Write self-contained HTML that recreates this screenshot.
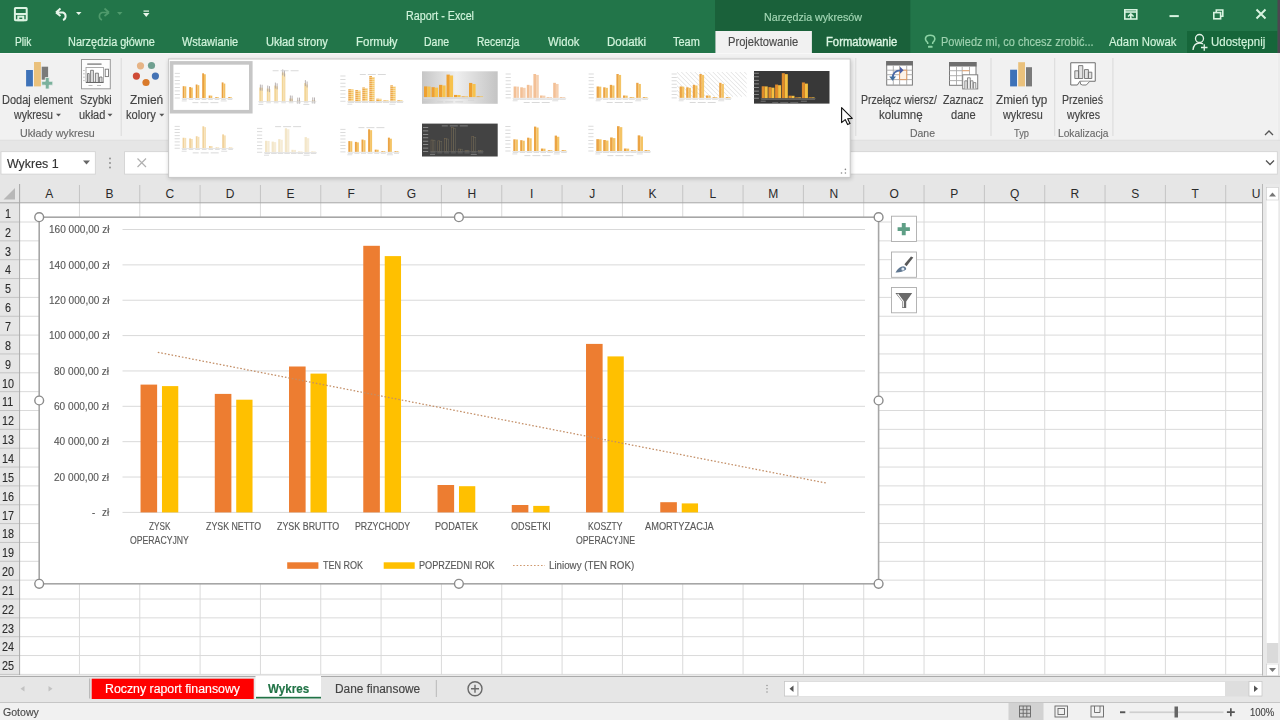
<!DOCTYPE html>
<html><head><meta charset="utf-8"><title>Raport - Excel</title>
<style>
html,body{margin:0;padding:0;width:1280px;height:720px;overflow:hidden;background:#fff;font-family:"Liberation Sans",sans-serif}
.l{position:absolute;left:0;top:0;width:1280px;height:720px}
.tx span{position:absolute;white-space:pre;transform-origin:0 0}
</style></head><body>
<svg class="l" style="z-index:1" width="1280" height="720" viewBox="0 0 1280 720"><rect x="0" y="0" width="1280" height="53" fill="#227549"/><rect x="715" y="0" width="195.3" height="53" fill="#1a613a"/><rect x="715.4" y="31" width="96.5" height="22.5" fill="#f1f1f1"/><rect x="1187" y="31" width="90.5" height="22" fill="#16663a"/><rect x="1277.5" y="0" width="2.5" height="53" fill="#4d4650"/><g fill="none" stroke="#dcf3e2" stroke-width="2"><rect x="14.9" y="8" width="11.8" height="12.2" rx="0.6"/><line x1="15" y1="14" x2="26.6" y2="14"/><rect x="18.3" y="16.6" width="5" height="3.6"/></g><path d="M56,12.5 L60.5,8.5 M56,12.5 L60.5,16 M56.5,12.5 L63,12.5 A4,4 0 0 1 63,20" fill="none" stroke="#e8f5ea" stroke-width="2"/><path d="M76,12 L81.5,12 L78.75,15 Z" fill="#e8f5ea"/><path d="M109,12.5 L104.5,8.5 M109,12.5 L104.5,16 M108.5,12.5 L102,12.5 A4,4 0 0 0 102,20" fill="none" stroke="#4f9a6c" stroke-width="1.7"/><path d="M117,12 L122.5,12 L119.75,15 Z" fill="#4f9a6c"/><rect x="143.5" y="10.5" width="5.5" height="1.2" fill="#e8f5ea"/><path d="M143,13 L149.5,13 L146.25,17 Z" fill="#e8f5ea"/><g fill="none" stroke="#d8f3e0" stroke-width="1.6"><rect x="1124.8" y="9.8" width="12" height="9.2"/><line x1="1124.8" y1="12" x2="1136.8" y2="12"/><path d="M1128,16.5 L1130.8,13.8 L1133.6,16.5 M1130.8,14 L1130.8,19"/></g><rect x="1169.5" y="15.1" width="9.3" height="2" fill="#d8f3e0"/><g fill="none" stroke="#d8f3e0" stroke-width="1.6"><rect x="1213.8" y="12.6" width="6.8" height="6.2"/><path d="M1216.3,12.6 L1216.3,10 L1222.8,10 L1222.8,16.3 L1220.6,16.3"/></g><path d="M1256.5,9.5 L1265.5,18.5 M1265.5,9.5 L1256.5,18.5" stroke="#d8f3e0" stroke-width="2"/><g fill="none" stroke="#8dd3a5" stroke-width="1.5"><path d="M927.8,44 L927.6,42.5 C925.8,41 925.3,38.8 925.6,37.8 C926.2,35.8 928,35.2 930.2,35.2 C932.4,35.2 934.2,35.8 934.7,37.8 C935,38.8 934.6,41 932.8,42.5 L932.6,44"/></g><rect x="928" y="45.8" width="4.6" height="2" rx="0.6" fill="#8dd3a5"/><g fill="none" stroke="#e4f2e8" stroke-width="1.3"><circle cx="1199.5" cy="38.5" r="4"/><path d="M1193,50 C1193.5,45 1196,43 1199.5,43 C1201,43 1202,43.3 1203,44"/><path d="M1201,47.5 L1207.5,47.5 M1204.25,44.2 L1204.25,50.8"/></g><rect x="0" y="53" width="1277.5" height="87.5" fill="#f1f1f1"/><rect x="0" y="53" width="1277.5" height="1" fill="#f8f8f8"/><rect x="1277.5" y="53" width="2.5" height="130" fill="#ececec"/><rect x="0" y="139.8" width="1280" height="1" fill="#dadada"/><rect x="120.7" y="58" width="1" height="78" fill="#dadada"/><rect x="855.3" y="58" width="1" height="78" fill="#dadada"/><rect x="990.5" y="58" width="1" height="78" fill="#dadada"/><rect x="1054.2" y="58" width="1" height="78" fill="#dadada"/><rect x="1112.4" y="58" width="1" height="78" fill="#dadada"/><rect x="26.1" y="70" width="6.8" height="16.4" fill="#3e72b8"/><rect x="34" y="62" width="6.9" height="24.4" fill="#eac17c"/><rect x="41.7" y="66.7" width="6.4" height="13" fill="#7a7a7a"/><path d="M45.3,77.5 h3.9 v3.8 h3.6 v3.9 h-3.6 v3.8 h-3.9 v-3.8 h-3.6 v-3.9 h3.6 z" fill="#7bb19c" stroke="#f1f1f1" stroke-width="0.8"/><path d="M56,113.8 L61,113.8 L58.5,116.5 Z" fill="#555"/><g><rect x="81.5" y="59.5" width="28.8" height="29.3" fill="#fdfdfd" stroke="#9a9a9a" stroke-width="1"/><rect x="87" y="63.2" width="14.8" height="1.8" rx="0.9" fill="#9a9a9a"/><rect x="86" y="67.4" width="17.4" height="15" fill="#fff" stroke="#999" stroke-width="0.8"/><path d="M86,82.4 H103.4" stroke="#666" stroke-width="1.2"/><path d="M87.5,82 V73.5 H89.2 V82 M90.6,82 V70.3 H93.4 V82 M95.4,82 V73.2 H98.4 V82 M99.6,82 V77 H102 V82" fill="#e4e4e4" stroke="#666" stroke-width="0.8"/><rect x="105.2" y="69.2" width="3.3" height="7.4" fill="#fff" stroke="#777" stroke-width="0.9"/><path d="M83.2,70.5 h1.5 M83.2,73.8 h1.5 M83.2,77.2 h1.5 M83.2,80.6 h1.5" stroke="#999" stroke-width="0.7"/><rect x="88.5" y="85" width="4" height="0.8" fill="#aaa"/><rect x="97" y="85" width="4" height="0.8" fill="#aaa"/></g><path d="M107.5,113.8 L112.5,113.8 L110,116.5 Z" fill="#555"/><circle cx="140.5" cy="65.8" r="3.6" fill="#e6b486"/><circle cx="151.5" cy="65.5" r="3.6" fill="#6f9f90"/><circle cx="136.4" cy="76.1" r="3.6" fill="#cf4b36"/><circle cx="155.4" cy="76.1" r="3.6" fill="#4472b4"/><circle cx="146" cy="82.5" r="3.6" fill="#d97a2b"/><path d="M159.3,113.8 L164.3,113.8 L161.8,116.5 Z" fill="#555"/><g><rect x="886.7" y="61.6" width="25.7" height="23.5" fill="#fff" stroke="#7a7a7a" stroke-width="1"/><rect x="886.2" y="61.1" width="26.7" height="4.4" fill="#6e6e6e"/><path d="M886.5,70.2 H912.5 M886.5,74.7 H912.5 M886.5,79.6 H912.5 M893.3,65.5 V85.2 M899.6,65.5 V85.2 M906.7,65.5 V85.2" stroke="#a8a8a8" stroke-width="0.9"/><rect x="899.6" y="70.2" width="7.1" height="9.4" fill="#fdf3e8" stroke="#dc9a66" stroke-width="1"/><path d="M892.6,78.5 C892.6,72.5 895.5,70.3 901,70.3" fill="none" stroke="#4a6aa8" stroke-width="1.7"/><path d="M900,66.8 L903.6,70.3 L900,73.8 Z" fill="#4a5fa8"/><path d="M889.2,76.6 L892.6,80.8 L896,76.6 Z" fill="#3f6ea0"/></g><g><rect x="949.5" y="62.5" width="26.5" height="22.8" fill="#fff" stroke="#7a7a7a" stroke-width="1"/><rect x="949" y="62" width="27.5" height="4.5" fill="#6e6e6e"/><path d="M949.5,75.7 H976 M949.5,80.6 H976 M956.5,66.5 V85 M962.2,66.5 V85 M969.5,66.5 V85" stroke="#a8a8a8" stroke-width="0.9"/><path d="M949.5,70.7 H962.2" stroke="#a8a8a8" stroke-width="0.9"/><path d="M962.2,70.7 H969.5" stroke="#dfa070" stroke-width="1.1"/><rect x="962.7" y="74.8" width="15" height="14.1" fill="#fff" stroke="#7f7f7f" stroke-width="1"/><path d="M964.8,88.5 V80.8 H967.2 V88.5 M967.5,88.5 V77.8 H970.3 V88.5 M970.5,88.5 V80.8 H973 V88.5 M973.3,88.5 V82.6 H975.8 V88.5" fill="#eee" stroke="#777" stroke-width="0.8"/></g><rect x="1010.1" y="69.7" width="6.9" height="16.7" fill="#3e72b8"/><rect x="1018.2" y="62.2" width="6.8" height="24.2" fill="#eac17c"/><rect x="1026" y="67.2" width="6" height="19.2" fill="#7a7a7a"/><g><path d="M1070.75,62.75 H1095.25 V81.25 H1079.8 L1077.4,85 H1070.75 Z" fill="#fff" stroke="#6f6f6f" stroke-width="1"/><path d="M1080.2,81.8 Q1079.8,85 1082.5,85 H1086.3 L1089.5,81.6" fill="#fff" stroke="#6f6f6f" stroke-width="0.9"/><path d="M1074.8,78.5 V70.8 H1078.6 V78.5 Z M1078.6,78.5 V65.6 H1082.8 V78.5 Z M1084.5,78.5 V69.6 H1088.4 V78.5 Z M1088.4,78.5 V72.2 H1091.8 V78.5 Z" fill="#e2e2e2" stroke="#707070" stroke-width="0.9"/></g><path d="M1265,135 L1269,131 L1273,135" fill="none" stroke="#555" stroke-width="1.3"/><rect x="0" y="140.8" width="1280" height="43.2" fill="#e6e6e6"/><rect x="1" y="151.7" width="94.3" height="22.4" fill="#fff" stroke="#d0d0d0" stroke-width="0.8"/><path d="M83,160.5 L90,160.5 L86.5,164.5 Z" fill="#666"/><circle cx="110" cy="158.5" r="0.9" fill="#888"/><circle cx="110" cy="163" r="0.9" fill="#888"/><circle cx="110" cy="167.5" r="0.9" fill="#888"/><rect x="124.6" y="151.7" width="1152.7" height="22.4" fill="#fff" stroke="#d0d0d0" stroke-width="0.8"/><path d="M137.5,158.5 L146,167 M146,158.5 L137.5,167" stroke="#b0b0b0" stroke-width="1.2"/><path d="M1266,160.5 L1270,164.5 L1274,160.5" fill="none" stroke="#555" stroke-width="1.3"/><rect x="0" y="184" width="1262.5" height="19" fill="#e6e6e6"/><rect x="0" y="203" width="19.6" height="472" fill="#e6e6e6"/><rect x="19.6" y="203" width="1243" height="472.5" fill="#fff"/><path d="M15,188 L15,199.5 L3.5,199.5 Z" fill="#b8b8b8"/><path d="M19.6,222.00 H1262.5 M19.6,240.85 H1262.5 M19.6,259.70 H1262.5 M19.6,278.55 H1262.5 M19.6,297.40 H1262.5 M19.6,316.25 H1262.5 M19.6,335.10 H1262.5 M19.6,353.95 H1262.5 M19.6,372.80 H1262.5 M19.6,391.65 H1262.5 M19.6,410.50 H1262.5 M19.6,429.35 H1262.5 M19.6,448.20 H1262.5 M19.6,467.05 H1262.5 M19.6,485.90 H1262.5 M19.6,504.75 H1262.5 M19.6,523.60 H1262.5 M19.6,542.45 H1262.5 M19.6,561.30 H1262.5 M19.6,580.15 H1262.5 M19.6,599.00 H1262.5 M19.6,617.85 H1262.5 M19.6,636.70 H1262.5 M19.6,655.55 H1262.5 M19.6,674.40 H1262.5 M79.44,203 V675 M139.77,203 V675 M200.10,203 V675 M260.43,203 V675 M320.76,203 V675 M381.09,203 V675 M441.42,203 V675 M501.75,203 V675 M562.08,203 V675 M622.41,203 V675 M682.74,203 V675 M743.07,203 V675 M803.40,203 V675 M863.73,203 V675 M924.06,203 V675 M984.39,203 V675 M1044.72,203 V675 M1105.05,203 V675 M1165.38,203 V675 M1225.71,203 V675" stroke="#dadada" stroke-width="1" fill="none"/><path d="M79.44,185 V203 M139.77,185 V203 M200.10,185 V203 M260.43,185 V203 M320.76,185 V203 M381.09,185 V203 M441.42,185 V203 M501.75,185 V203 M562.08,185 V203 M622.41,185 V203 M682.74,185 V203 M743.07,185 V203 M803.40,185 V203 M863.73,185 V203 M924.06,185 V203 M984.39,185 V203 M1044.72,185 V203 M1105.05,185 V203 M1165.38,185 V203 M1225.71,185 V203 M0,222.00 H19.6 M0,240.85 H19.6 M0,259.70 H19.6 M0,278.55 H19.6 M0,297.40 H19.6 M0,316.25 H19.6 M0,335.10 H19.6 M0,353.95 H19.6 M0,372.80 H19.6 M0,391.65 H19.6 M0,410.50 H19.6 M0,429.35 H19.6 M0,448.20 H19.6 M0,467.05 H19.6 M0,485.90 H19.6 M0,504.75 H19.6 M0,523.60 H19.6 M0,542.45 H19.6 M0,561.30 H19.6 M0,580.15 H19.6 M0,599.00 H19.6 M0,617.85 H19.6 M0,636.70 H19.6 M0,655.55 H19.6 M0,674.40 H19.6" stroke="#c4c4c4" stroke-width="1" fill="none"/><rect x="0" y="202.3" width="1262.5" height="1" fill="#a8a8a8"/><rect x="19.1" y="184" width="1" height="491" fill="#a8a8a8"/><rect x="1262.5" y="184" width="17.5" height="492" fill="#e9e9e9"/><rect x="1266.7" y="187.5" width="11.6" height="488" fill="#fff"/><rect x="1266.7" y="187.5" width="11.6" height="12.5" fill="#fff" stroke="#c8c8c8" stroke-width="0.6"/><path d="M1269,196.5 L1272.5,192.5 L1276,196.5 Z" fill="#777"/><rect x="1266.7" y="643" width="11.6" height="20" fill="#dadada"/><rect x="1266.7" y="664" width="11.6" height="12" fill="#fff" stroke="#c8c8c8" stroke-width="0.6"/><path d="M1269,668 L1272.5,672 L1276,668 Z" fill="#777"/><rect x="1262" y="184" width="0.9" height="492" fill="#b0b0b0"/><rect x="0" y="675.5" width="1280" height="27" fill="#e6e6e6"/><rect x="0" y="675.9" width="1280" height="1.1" fill="#ababab"/><rect x="0" y="702" width="1280" height="1" fill="#c6c6c6"/><rect x="0" y="703" width="1280" height="17" fill="#f1f1f1"/><path d="M24.5,686 L20.5,688.75 L24.5,691.5 Z" fill="#c2c2c2"/><path d="M48.5,686 L52.5,688.75 L48.5,691.5 Z" fill="#c2c2c2"/><rect x="89.2" y="678.5" width="1" height="20" fill="#b0b0b0"/><rect x="91.7" y="678.7" width="162" height="20.3" fill="#ff0000"/><rect x="255.5" y="676" width="65.5" height="22.5" fill="#ffffff"/><rect x="256" y="696.8" width="65" height="1.7" fill="#217346"/><rect x="435.8" y="680" width="1" height="17" fill="#b8b8b8"/><g fill="none" stroke="#6a6a6a" stroke-width="1.4"><circle cx="475" cy="688.75" r="7"/><path d="M471,688.75 H479 M475,684.75 V692.75"/></g><circle cx="767" cy="685.5" r="0.8" fill="#999"/><circle cx="767" cy="688.75" r="0.8" fill="#999"/><circle cx="767" cy="692" r="0.8" fill="#999"/><rect x="784" y="681" width="478" height="15.5" fill="#dedede"/><rect x="784.5" y="681.5" width="13" height="14.5" fill="#fff" stroke="#c4c4c4" stroke-width="0.7"/><path d="M793.5,685.5 L789.5,688.75 L793.5,692 Z" fill="#555"/><rect x="799" y="682" width="426" height="14" fill="#fff"/><rect x="1249" y="681.5" width="13" height="14.5" fill="#fff" stroke="#c4c4c4" stroke-width="0.7"/><path d="M1254,685.5 L1258,688.75 L1254,692 Z" fill="#555"/><rect x="1008.5" y="703" width="35" height="17" fill="#d2d2d2"/><g fill="none" stroke="#666" stroke-width="0.9"><rect x="1019.5" y="706" width="11" height="11"/><path d="M1023.2,706 V717 M1026.8,706 V717 M1019.5,709.7 H1030.5 M1019.5,713.3 H1030.5"/></g><g fill="none" stroke="#666" stroke-width="0.9"><rect x="1055" y="706" width="12.5" height="11"/><rect x="1058" y="708.5" width="6.5" height="6"/></g><g fill="none" stroke="#666" stroke-width="0.9"><rect x="1091" y="706" width="12.5" height="11"/><path d="M1094.5,706 V712.5 H1100 V706"/></g><rect x="1120" y="711.3" width="5.3" height="1.9" fill="#555"/><rect x="1129.5" y="711.4" width="94" height="1.7" fill="#cfcfcf"/><rect x="1174.5" y="706.5" width="3.5" height="11" fill="#666"/><path d="M1226.9,712.2 H1234.8 M1230.85,708.3 V716.2" stroke="#555" stroke-width="1.7"/><rect x="39.2" y="217.2" width="839.4" height="366.59999999999997" fill="#fff" stroke="#a6a6a6" stroke-width="1.6"/><path d="M122.5,512.40 H865 M122.5,477.04 H865 M122.5,441.67 H865 M122.5,406.31 H865 M122.5,370.95 H865 M122.5,335.59 H865 M122.5,300.23 H865 M122.5,264.86 H865 M122.5,229.50 H865" stroke="#d9d9d9" stroke-width="1" fill="none"/><rect x="140.53" y="384.60" width="16.6" height="127.80" fill="#ed7d31"/><rect x="161.97" y="386.10" width="16.3" height="126.30" fill="#ffc000"/><rect x="214.78" y="393.90" width="16.6" height="118.50" fill="#ed7d31"/><rect x="236.22" y="399.70" width="16.3" height="112.70" fill="#ffc000"/><rect x="289.02" y="366.50" width="16.6" height="145.90" fill="#ed7d31"/><rect x="310.48" y="373.60" width="16.3" height="138.80" fill="#ffc000"/><rect x="363.27" y="245.80" width="16.6" height="266.60" fill="#ed7d31"/><rect x="384.73" y="256.10" width="16.3" height="256.30" fill="#ffc000"/><rect x="437.52" y="485.00" width="16.6" height="27.40" fill="#ed7d31"/><rect x="458.98" y="486.20" width="16.3" height="26.20" fill="#ffc000"/><rect x="511.77" y="505.00" width="16.6" height="7.40" fill="#ed7d31"/><rect x="533.23" y="505.90" width="16.3" height="6.50" fill="#ffc000"/><rect x="586.02" y="343.90" width="16.6" height="168.50" fill="#ed7d31"/><rect x="607.48" y="356.40" width="16.3" height="156.00" fill="#ffc000"/><rect x="660.27" y="502.20" width="16.6" height="10.20" fill="#ed7d31"/><rect x="681.73" y="503.40" width="16.3" height="9.00" fill="#ffc000"/><path d="M157.8,352.3 L827,483.2" stroke="#c38e66" stroke-width="1.25" stroke-dasharray="1.6 1.9" fill="none"/><rect x="287.2" y="562.3" width="31.2" height="6.5" fill="#ed7d31"/><rect x="383.7" y="562.3" width="31" height="6.5" fill="#ffc000"/><path d="M513,565.5 H545" stroke="#cf9a70" stroke-width="1.2" stroke-dasharray="1.6 1.9"/><circle cx="39.20" cy="217.20" r="4.4" fill="#fff" stroke="#8c8c8c" stroke-width="1.4"/><circle cx="458.90" cy="217.20" r="4.4" fill="#fff" stroke="#8c8c8c" stroke-width="1.4"/><circle cx="878.60" cy="217.20" r="4.4" fill="#fff" stroke="#8c8c8c" stroke-width="1.4"/><circle cx="39.20" cy="400.50" r="4.4" fill="#fff" stroke="#8c8c8c" stroke-width="1.4"/><circle cx="878.60" cy="400.50" r="4.4" fill="#fff" stroke="#8c8c8c" stroke-width="1.4"/><circle cx="39.20" cy="583.80" r="4.4" fill="#fff" stroke="#8c8c8c" stroke-width="1.4"/><circle cx="458.90" cy="583.80" r="4.4" fill="#fff" stroke="#8c8c8c" stroke-width="1.4"/><circle cx="878.60" cy="583.80" r="4.4" fill="#fff" stroke="#8c8c8c" stroke-width="1.4"/><rect x="891.5" y="216.2" width="25" height="25.3" fill="#fff" stroke="#adadad" stroke-width="0.9"/><rect x="891.5" y="252" width="25" height="25.3" fill="#fff" stroke="#adadad" stroke-width="0.9"/><rect x="891.5" y="287.5" width="25" height="25.3" fill="#fff" stroke="#adadad" stroke-width="0.9"/><path d="M901.8,223 h3.9 v4.2 h4.2 v3.9 h-4.2 v4.2 h-3.9 v-4.2 h-4.2 v-3.9 h4.2 z" fill="#5f9f86"/><path d="M913.3,257.6 L911,256.6 L904.4,264.3 L906.5,266.2 Z" fill="#595959"/><path d="M895.5,272.4 C897.4,268.6 900.4,266.2 903.4,266.2 C905.4,266.6 906.6,268 906.1,269.4 C903.6,271.7 899.1,272.6 895.5,272.4 Z" fill="#5f7791"/><circle cx="902.9" cy="268.9" r="1.5" fill="#dfeaf4"/><path d="M895.4,293 H912.2 L906.2,301.4 V308 H902.2 V301.4 Z" fill="#6a6a6a"/><path d="M897.6,293.9 L903.3,301.5 V307.3" fill="none" stroke="#fff" stroke-width="1.1"/></svg>
<div class="l tx" style="z-index:2"><span style="left:406.30px;top:9.84px;font-size:12px;line-height:12px;color:#d2f4dc;-webkit-text-stroke:0.15px #d2f4dc;transform:scaleX(0.8944);">Raport - Excel</span><span style="left:763.50px;top:11.76px;font-size:10.8px;line-height:10.8px;color:#a5d8b6;-webkit-text-stroke:0.15px #a5d8b6;transform:scaleX(0.9889);">Narzędzia wykresów</span><span style="left:14.60px;top:36.14px;font-size:12px;line-height:12px;color:#d2f4dc;-webkit-text-stroke:0.2px #d2f4dc;transform:scaleX(0.8458);">Plik</span><span style="left:67.50px;top:36.14px;font-size:12px;line-height:12px;color:#d2f4dc;-webkit-text-stroke:0.2px #d2f4dc;transform:scaleX(0.9111);">Narzędzia główne</span><span style="left:182.00px;top:36.14px;font-size:12px;line-height:12px;color:#d2f4dc;-webkit-text-stroke:0.2px #d2f4dc;transform:scaleX(0.9160);">Wstawianie</span><span style="left:265.70px;top:36.14px;font-size:12px;line-height:12px;color:#d2f4dc;-webkit-text-stroke:0.2px #d2f4dc;transform:scaleX(0.9282);">Układ strony</span><span style="left:355.50px;top:36.14px;font-size:12px;line-height:12px;color:#d2f4dc;-webkit-text-stroke:0.2px #d2f4dc;transform:scaleX(0.9576);">Formuły</span><span style="left:424.40px;top:36.14px;font-size:12px;line-height:12px;color:#d2f4dc;-webkit-text-stroke:0.2px #d2f4dc;transform:scaleX(0.8720);">Dane</span><span style="left:477.20px;top:36.14px;font-size:12px;line-height:12px;color:#d2f4dc;-webkit-text-stroke:0.2px #d2f4dc;transform:scaleX(0.8500);">Recenzja</span><span style="left:547.50px;top:36.14px;font-size:12px;line-height:12px;color:#d2f4dc;-webkit-text-stroke:0.2px #d2f4dc;transform:scaleX(0.9435);">Widok</span><span style="left:607.20px;top:36.14px;font-size:12px;line-height:12px;color:#d2f4dc;-webkit-text-stroke:0.2px #d2f4dc;transform:scaleX(0.9620);">Dodatki</span><span style="left:673.20px;top:36.14px;font-size:12px;line-height:12px;color:#d2f4dc;-webkit-text-stroke:0.2px #d2f4dc;transform:scaleX(0.9132);">Team</span><span style="left:826.00px;top:36.14px;font-size:12px;line-height:12px;color:#dcf6e3;-webkit-text-stroke:0.35px #dcf6e3;transform:scaleX(0.9377);">Formatowanie</span><span style="left:728.00px;top:36.14px;font-size:12px;line-height:12px;color:#4a4a4a;-webkit-text-stroke:0.15px #4a4a4a;transform:scaleX(0.9300);">Projektowanie</span><span style="left:940.70px;top:36.14px;font-size:12px;line-height:12px;color:#9fd2b0;-webkit-text-stroke:0.15px #9fd2b0;transform:scaleX(0.9153);">Powiedz mi, co chcesz zrobić...</span><span style="left:1109.30px;top:36.14px;font-size:12px;line-height:12px;color:#d2f4dc;-webkit-text-stroke:0.15px #d2f4dc;transform:scaleX(0.9439);">Adam Nowak</span><span style="left:1211.00px;top:36.14px;font-size:12px;line-height:12px;color:#d2f4dc;-webkit-text-stroke:0.15px #d2f4dc;transform:scaleX(0.9565);">Udostępnij</span><span style="left:1.60px;top:93.84px;font-size:12px;line-height:12px;color:#444444;-webkit-text-stroke:0.15px #444444;transform:scaleX(0.9149);">Dodaj element</span><span style="left:14.09px;top:108.84px;font-size:12px;line-height:12px;color:#444444;-webkit-text-stroke:0.15px #444444;transform:scaleX(0.8864);">wykresu</span><span style="left:80.20px;top:93.84px;font-size:12px;line-height:12px;color:#444444;-webkit-text-stroke:0.15px #444444;transform:scaleX(0.8968);">Szybki</span><span style="left:78.80px;top:108.84px;font-size:12px;line-height:12px;color:#444444;-webkit-text-stroke:0.15px #444444;transform:scaleX(0.9174);">układ</span><span style="left:130.00px;top:93.84px;font-size:12px;line-height:12px;color:#444444;-webkit-text-stroke:0.15px #444444;transform:scaleX(0.9949);">Zmień</span><span style="left:126.30px;top:108.84px;font-size:12px;line-height:12px;color:#444444;-webkit-text-stroke:0.15px #444444;transform:scaleX(0.9278);">kolory</span><span style="left:20.30px;top:127.69px;font-size:11px;line-height:11px;color:#6a6a6a;-webkit-text-stroke:0.15px #6a6a6a;transform:scaleX(0.9713);">Układy wykresu</span><span style="left:861.40px;top:94.14px;font-size:12px;line-height:12px;color:#444444;-webkit-text-stroke:0.15px #444444;transform:scaleX(0.8769);">Przełącz wiersz/</span><span style="left:879.00px;top:108.84px;font-size:12px;line-height:12px;color:#444444;-webkit-text-stroke:0.15px #444444;transform:scaleX(0.9631);">kolumnę</span><span style="left:942.80px;top:94.14px;font-size:12px;line-height:12px;color:#444444;-webkit-text-stroke:0.15px #444444;transform:scaleX(0.8930);">Zaznacz</span><span style="left:951.00px;top:108.84px;font-size:12px;line-height:12px;color:#444444;-webkit-text-stroke:0.15px #444444;transform:scaleX(0.9252);">dane</span><span style="left:909.60px;top:127.69px;font-size:11px;line-height:11px;color:#6a6a6a;-webkit-text-stroke:0.15px #6a6a6a;transform:scaleX(0.9511);">Dane</span><span style="left:995.80px;top:94.14px;font-size:12px;line-height:12px;color:#444444;-webkit-text-stroke:0.15px #444444;transform:scaleX(0.9734);">Zmień typ</span><span style="left:1003.20px;top:108.84px;font-size:12px;line-height:12px;color:#444444;-webkit-text-stroke:0.15px #444444;transform:scaleX(0.9045);">wykresu</span><span style="left:1014.40px;top:127.69px;font-size:11px;line-height:11px;color:#6a6a6a;-webkit-text-stroke:0.15px #6a6a6a;transform:scaleX(0.8403);">Typ</span><span style="left:1062.00px;top:94.14px;font-size:12px;line-height:12px;color:#444444;-webkit-text-stroke:0.15px #444444;transform:scaleX(0.8782);">Przenieś</span><span style="left:1067.28px;top:108.84px;font-size:12px;line-height:12px;color:#444444;-webkit-text-stroke:0.15px #444444;transform:scaleX(0.8843);">wykres</span><span style="left:1057.70px;top:127.69px;font-size:11px;line-height:11px;color:#6a6a6a;-webkit-text-stroke:0.15px #6a6a6a;transform:scaleX(0.9276);">Lokalizacja</span><span style="left:7.00px;top:157.64px;font-size:12px;line-height:12px;color:#333;-webkit-text-stroke:0.15px #333;transform:scaleX(1.0353);">Wykres 1</span><span style="left:45.27px;top:188.34px;font-size:12px;line-height:12px;color:#2a2a2a;">A</span><span style="left:105.61px;top:188.34px;font-size:12px;line-height:12px;color:#2a2a2a;">B</span><span style="left:165.44px;top:188.34px;font-size:12px;line-height:12px;color:#2a2a2a;">C</span><span style="left:225.76px;top:188.34px;font-size:12px;line-height:12px;color:#2a2a2a;">D</span><span style="left:286.60px;top:188.34px;font-size:12px;line-height:12px;color:#2a2a2a;">E</span><span style="left:347.43px;top:188.34px;font-size:12px;line-height:12px;color:#2a2a2a;">F</span><span style="left:406.75px;top:188.34px;font-size:12px;line-height:12px;color:#2a2a2a;">G</span><span style="left:467.58px;top:188.34px;font-size:12px;line-height:12px;color:#2a2a2a;">H</span><span style="left:529.91px;top:188.34px;font-size:12px;line-height:12px;color:#2a2a2a;">I</span><span style="left:589.25px;top:188.34px;font-size:12px;line-height:12px;color:#2a2a2a;">J</span><span style="left:648.58px;top:188.34px;font-size:12px;line-height:12px;color:#2a2a2a;">K</span><span style="left:709.40px;top:188.34px;font-size:12px;line-height:12px;color:#2a2a2a;">L</span><span style="left:768.24px;top:188.34px;font-size:12px;line-height:12px;color:#2a2a2a;">M</span><span style="left:829.56px;top:188.34px;font-size:12px;line-height:12px;color:#2a2a2a;">N</span><span style="left:889.39px;top:188.34px;font-size:12px;line-height:12px;color:#2a2a2a;">O</span><span style="left:950.23px;top:188.34px;font-size:12px;line-height:12px;color:#2a2a2a;">P</span><span style="left:1010.05px;top:188.34px;font-size:12px;line-height:12px;color:#2a2a2a;">Q</span><span style="left:1070.38px;top:188.34px;font-size:12px;line-height:12px;color:#2a2a2a;">R</span><span style="left:1131.21px;top:188.34px;font-size:12px;line-height:12px;color:#2a2a2a;">S</span><span style="left:1191.54px;top:188.34px;font-size:12px;line-height:12px;color:#2a2a2a;">T</span><span style="left:1251.87px;top:188.34px;font-size:12px;line-height:12px;color:#2a2a2a;">U</span><span style="left:4.65px;top:207.92px;font-size:12px;line-height:12px;color:#2a2a2a;-webkit-text-stroke:0.1px #2a2a2a;transform:scaleX(0.9000);">1</span><span style="left:4.65px;top:226.77px;font-size:12px;line-height:12px;color:#2a2a2a;-webkit-text-stroke:0.1px #2a2a2a;transform:scaleX(0.9000);">2</span><span style="left:4.65px;top:245.62px;font-size:12px;line-height:12px;color:#2a2a2a;-webkit-text-stroke:0.1px #2a2a2a;transform:scaleX(0.9000);">3</span><span style="left:4.65px;top:264.47px;font-size:12px;line-height:12px;color:#2a2a2a;-webkit-text-stroke:0.1px #2a2a2a;transform:scaleX(0.9000);">4</span><span style="left:4.65px;top:283.32px;font-size:12px;line-height:12px;color:#2a2a2a;-webkit-text-stroke:0.1px #2a2a2a;transform:scaleX(0.9000);">5</span><span style="left:4.65px;top:302.17px;font-size:12px;line-height:12px;color:#2a2a2a;-webkit-text-stroke:0.1px #2a2a2a;transform:scaleX(0.9000);">6</span><span style="left:4.65px;top:321.02px;font-size:12px;line-height:12px;color:#2a2a2a;-webkit-text-stroke:0.1px #2a2a2a;transform:scaleX(0.9000);">7</span><span style="left:4.65px;top:339.87px;font-size:12px;line-height:12px;color:#2a2a2a;-webkit-text-stroke:0.1px #2a2a2a;transform:scaleX(0.9000);">8</span><span style="left:4.65px;top:358.72px;font-size:12px;line-height:12px;color:#2a2a2a;-webkit-text-stroke:0.1px #2a2a2a;transform:scaleX(0.9000);">9</span><span style="left:1.65px;top:377.57px;font-size:12px;line-height:12px;color:#2a2a2a;-webkit-text-stroke:0.1px #2a2a2a;transform:scaleX(0.9000);">10</span><span style="left:2.05px;top:396.42px;font-size:12px;line-height:12px;color:#2a2a2a;-webkit-text-stroke:0.1px #2a2a2a;transform:scaleX(0.9000);">11</span><span style="left:1.65px;top:415.27px;font-size:12px;line-height:12px;color:#2a2a2a;-webkit-text-stroke:0.1px #2a2a2a;transform:scaleX(0.9000);">12</span><span style="left:1.65px;top:434.12px;font-size:12px;line-height:12px;color:#2a2a2a;-webkit-text-stroke:0.1px #2a2a2a;transform:scaleX(0.9000);">13</span><span style="left:1.65px;top:452.97px;font-size:12px;line-height:12px;color:#2a2a2a;-webkit-text-stroke:0.1px #2a2a2a;transform:scaleX(0.9000);">14</span><span style="left:1.65px;top:471.82px;font-size:12px;line-height:12px;color:#2a2a2a;-webkit-text-stroke:0.1px #2a2a2a;transform:scaleX(0.9000);">15</span><span style="left:1.65px;top:490.67px;font-size:12px;line-height:12px;color:#2a2a2a;-webkit-text-stroke:0.1px #2a2a2a;transform:scaleX(0.9000);">16</span><span style="left:1.65px;top:509.52px;font-size:12px;line-height:12px;color:#2a2a2a;-webkit-text-stroke:0.1px #2a2a2a;transform:scaleX(0.9000);">17</span><span style="left:1.65px;top:528.37px;font-size:12px;line-height:12px;color:#2a2a2a;-webkit-text-stroke:0.1px #2a2a2a;transform:scaleX(0.9000);">18</span><span style="left:1.65px;top:547.22px;font-size:12px;line-height:12px;color:#2a2a2a;-webkit-text-stroke:0.1px #2a2a2a;transform:scaleX(0.9000);">19</span><span style="left:1.65px;top:566.07px;font-size:12px;line-height:12px;color:#2a2a2a;-webkit-text-stroke:0.1px #2a2a2a;transform:scaleX(0.9000);">20</span><span style="left:1.65px;top:584.92px;font-size:12px;line-height:12px;color:#2a2a2a;-webkit-text-stroke:0.1px #2a2a2a;transform:scaleX(0.9000);">21</span><span style="left:1.65px;top:603.77px;font-size:12px;line-height:12px;color:#2a2a2a;-webkit-text-stroke:0.1px #2a2a2a;transform:scaleX(0.9000);">22</span><span style="left:1.65px;top:622.62px;font-size:12px;line-height:12px;color:#2a2a2a;-webkit-text-stroke:0.1px #2a2a2a;transform:scaleX(0.9000);">23</span><span style="left:1.65px;top:641.47px;font-size:12px;line-height:12px;color:#2a2a2a;-webkit-text-stroke:0.1px #2a2a2a;transform:scaleX(0.9000);">24</span><span style="left:1.65px;top:660.32px;font-size:12px;line-height:12px;color:#2a2a2a;-webkit-text-stroke:0.1px #2a2a2a;transform:scaleX(0.9000);">25</span><span style="left:104.50px;top:682.84px;font-size:12px;line-height:12px;color:#ffffff;-webkit-text-stroke:0.15px #ffffff;transform:scaleX(1.0275);">Roczny raport finansowy</span><span style="left:267.50px;top:682.84px;font-size:12px;line-height:12px;color:#217346;font-weight:700;-webkit-text-stroke:0.15px #217346;transform:scaleX(0.9696);">Wykres</span><span style="left:335.00px;top:682.84px;font-size:12px;line-height:12px;color:#444;-webkit-text-stroke:0.15px #444;transform:scaleX(0.9898);">Dane finansowe</span><span style="left:2.90px;top:706.89px;font-size:11px;line-height:11px;color:#4a4a4a;-webkit-text-stroke:0.15px #4a4a4a;transform:scaleX(0.9605);">Gotowy</span><span style="left:1249.50px;top:707.19px;font-size:11px;line-height:11px;color:#444;-webkit-text-stroke:0.15px #444;transform:scaleX(0.8641);">100%</span><span style="left:91.70px;top:507.11px;font-size:10.5px;line-height:10.5px;color:#595959;-webkit-text-stroke:0.15px #595959;transform:scaleX(0.9000);">-</span><span style="left:102.00px;top:507.11px;font-size:10.5px;line-height:10.5px;color:#595959;-webkit-text-stroke:0.15px #595959;transform:scaleX(0.9455);">zł</span><span style="left:54.40px;top:471.75px;font-size:10.5px;line-height:10.5px;color:#595959;-webkit-text-stroke:0.15px #595959;transform:scaleX(0.9606);">20 000,00 zł</span><span style="left:54.40px;top:436.39px;font-size:10.5px;line-height:10.5px;color:#595959;-webkit-text-stroke:0.15px #595959;transform:scaleX(0.9606);">40 000,00 zł</span><span style="left:54.40px;top:401.02px;font-size:10.5px;line-height:10.5px;color:#595959;-webkit-text-stroke:0.15px #595959;transform:scaleX(0.9606);">60 000,00 zł</span><span style="left:54.40px;top:365.66px;font-size:10.5px;line-height:10.5px;color:#595959;-webkit-text-stroke:0.15px #595959;transform:scaleX(0.9606);">80 000,00 zł</span><span style="left:48.90px;top:330.30px;font-size:10.5px;line-height:10.5px;color:#595959;-webkit-text-stroke:0.15px #595959;transform:scaleX(0.9589);">100 000,00 zł</span><span style="left:48.90px;top:294.94px;font-size:10.5px;line-height:10.5px;color:#595959;-webkit-text-stroke:0.15px #595959;transform:scaleX(0.9589);">120 000,00 zł</span><span style="left:48.90px;top:259.57px;font-size:10.5px;line-height:10.5px;color:#595959;-webkit-text-stroke:0.15px #595959;transform:scaleX(0.9589);">140 000,00 zł</span><span style="left:48.90px;top:224.21px;font-size:10.5px;line-height:10.5px;color:#595959;-webkit-text-stroke:0.15px #595959;transform:scaleX(0.9589);">160 000,00 zł</span><span style="left:148.93px;top:521.01px;font-size:10.5px;line-height:10.5px;color:#595959;-webkit-text-stroke:0.15px #595959;transform:scaleX(0.7804);">ZYSK</span><span style="left:130.18px;top:534.91px;font-size:10.5px;line-height:10.5px;color:#595959;-webkit-text-stroke:0.15px #595959;transform:scaleX(0.8275);">OPERACYJNY</span><span style="left:206.38px;top:521.01px;font-size:10.5px;line-height:10.5px;color:#595959;-webkit-text-stroke:0.15px #595959;transform:scaleX(0.8389);">ZYSK NETTO</span><span style="left:277.12px;top:521.01px;font-size:10.5px;line-height:10.5px;color:#595959;-webkit-text-stroke:0.15px #595959;transform:scaleX(0.8476);">ZYSK BRUTTO</span><span style="left:354.77px;top:521.01px;font-size:10.5px;line-height:10.5px;color:#595959;-webkit-text-stroke:0.15px #595959;transform:scaleX(0.8374);">PRZYCHODY</span><span style="left:435.12px;top:521.01px;font-size:10.5px;line-height:10.5px;color:#595959;-webkit-text-stroke:0.15px #595959;transform:scaleX(0.8705);">PODATEK</span><span style="left:511.38px;top:521.01px;font-size:10.5px;line-height:10.5px;color:#595959;-webkit-text-stroke:0.15px #595959;transform:scaleX(0.8633);">ODSETKI</span><span style="left:587.92px;top:521.01px;font-size:10.5px;line-height:10.5px;color:#595959;-webkit-text-stroke:0.15px #595959;transform:scaleX(0.8190);">KOSZTY</span><span style="left:575.62px;top:534.91px;font-size:10.5px;line-height:10.5px;color:#595959;-webkit-text-stroke:0.15px #595959;transform:scaleX(0.8289);">OPERACYJNE</span><span style="left:645.02px;top:521.01px;font-size:10.5px;line-height:10.5px;color:#595959;-webkit-text-stroke:0.15px #595959;transform:scaleX(0.8810);">AMORTYZACJA</span><span style="left:322.90px;top:559.91px;font-size:10.5px;line-height:10.5px;color:#595959;-webkit-text-stroke:0.15px #595959;transform:scaleX(0.8593);">TEN ROK</span><span style="left:418.50px;top:559.91px;font-size:10.5px;line-height:10.5px;color:#595959;-webkit-text-stroke:0.15px #595959;transform:scaleX(0.8709);">POPRZEDNI ROK</span><span style="left:549.00px;top:559.91px;font-size:10.5px;line-height:10.5px;color:#595959;-webkit-text-stroke:0.15px #595959;transform:scaleX(0.9297);">Liniowy (TEN ROK)</span></div>
<svg class="l" style="z-index:3" width="1280" height="720" viewBox="0 0 1280 720"><defs><filter id="sh" x="-5%" y="-10%" width="110%" height="125%"><feGaussianBlur stdDeviation="2"/></filter></defs><rect x="168.6" y="60" width="683" height="119" fill="#000" opacity="0.18" filter="url(#sh)"/><rect x="168.6" y="59" width="681.6" height="118.4" fill="#fff" stroke="#c8c8c8" stroke-width="1"/><rect x="171.6" y="62.9" width="79.2" height="48.8" fill="none" stroke="#c6c6c6" stroke-width="3.6"/><circle cx="841.5" cy="173" r="0.8" fill="#888"/><circle cx="845.4" cy="173" r="0.8" fill="#888"/><circle cx="845.4" cy="169.4" r="0.8" fill="#888"/><rect x="174.7" y="97.6" width="5.2" height="0.8" fill="#d2d2d2"/><rect x="174.7" y="94.1" width="5.2" height="0.8" fill="#d2d2d2"/><rect x="174.7" y="90.5" width="5.2" height="0.8" fill="#d2d2d2"/><rect x="174.7" y="87.0" width="5.2" height="0.8" fill="#d2d2d2"/><rect x="174.7" y="83.5" width="5.2" height="0.8" fill="#d2d2d2"/><rect x="174.7" y="80.0" width="5.2" height="0.8" fill="#d2d2d2"/><rect x="174.7" y="76.4" width="5.2" height="0.8" fill="#d2d2d2"/><rect x="174.7" y="72.9" width="5.2" height="0.8" fill="#d2d2d2"/><rect x="182.70" y="86.20" width="1.80" height="11.80" fill="#e9a040"/><rect x="184.50" y="86.36" width="1.80" height="11.64" fill="#f3c060"/><rect x="189.20" y="87.05" width="1.80" height="10.95" fill="#e9a040"/><rect x="191.00" y="87.59" width="1.80" height="10.41" fill="#f3c060"/><rect x="195.70" y="84.51" width="1.80" height="13.49" fill="#e9a040"/><rect x="197.50" y="85.17" width="1.80" height="12.83" fill="#f3c060"/><rect x="202.20" y="73.30" width="1.80" height="24.70" fill="#e9a040"/><rect x="204.00" y="74.25" width="1.80" height="23.75" fill="#f3c060"/><rect x="208.70" y="95.51" width="1.80" height="2.49" fill="#e9a040"/><rect x="210.50" y="95.62" width="1.80" height="2.38" fill="#f3c060"/><rect x="215.20" y="97.20" width="1.80" height="0.80" fill="#e9a040"/><rect x="217.00" y="97.20" width="1.80" height="0.80" fill="#f3c060"/><rect x="221.70" y="82.41" width="1.80" height="15.59" fill="#e9a040"/><rect x="223.50" y="83.58" width="1.80" height="14.42" fill="#f3c060"/><rect x="228.20" y="97.11" width="1.80" height="0.89" fill="#e9a040"/><rect x="230.00" y="97.20" width="1.80" height="0.80" fill="#f3c060"/><rect x="181.7" y="98.0" width="51.1" height="0.6" fill="#d8d8d8"/><rect x="182.20" y="99.0" width="4.60" height="0.8" fill="#d8d8d8"/><rect x="188.70" y="99.0" width="4.60" height="0.8" fill="#d8d8d8"/><rect x="195.20" y="99.0" width="4.60" height="0.8" fill="#d8d8d8"/><rect x="201.70" y="99.0" width="4.60" height="0.8" fill="#d8d8d8"/><rect x="208.20" y="99.0" width="4.60" height="0.8" fill="#d8d8d8"/><rect x="214.70" y="99.0" width="4.60" height="0.8" fill="#d8d8d8"/><rect x="221.20" y="99.0" width="4.60" height="0.8" fill="#d8d8d8"/><rect x="227.70" y="99.0" width="4.60" height="0.8" fill="#d8d8d8"/><rect x="192.4" y="102.3" width="6" height="0.8" fill="#d0d0d0"/><rect x="200.4" y="102.3" width="8" height="0.8" fill="#d0d0d0"/><rect x="210.4" y="102.3" width="8" height="0.8" fill="#d0d0d0"/><rect x="181.7" y="100.6" width="5" height="0.7" fill="#d0d0d0"/><rect x="220.7" y="100.6" width="6" height="0.7" fill="#d0d0d0"/><rect x="259.30" y="87.54" width="1.80" height="13.86" fill="#f2d596"/><rect x="261.10" y="87.74" width="1.80" height="13.66" fill="#f5dca8"/><rect x="259.90" y="84.54" width="0.8" height="6" fill="#a8a0a0"/><rect x="261.70" y="84.74" width="0.8" height="6" fill="#a8a0a0"/><rect x="266.80" y="88.55" width="1.80" height="12.85" fill="#f2d596"/><rect x="268.60" y="89.18" width="1.80" height="12.22" fill="#f5dca8"/><rect x="267.40" y="85.55" width="0.8" height="6" fill="#a8a0a0"/><rect x="269.20" y="86.18" width="0.8" height="6" fill="#a8a0a0"/><rect x="274.30" y="85.56" width="1.80" height="15.84" fill="#f2d596"/><rect x="276.10" y="86.33" width="1.80" height="15.07" fill="#f5dca8"/><rect x="274.90" y="82.56" width="0.8" height="6" fill="#a8a0a0"/><rect x="276.70" y="83.33" width="0.8" height="6" fill="#a8a0a0"/><rect x="281.80" y="72.40" width="1.80" height="29.00" fill="#f2d596"/><rect x="283.60" y="73.52" width="1.80" height="27.88" fill="#f5dca8"/><rect x="282.40" y="69.40" width="0.8" height="6" fill="#a8a0a0"/><rect x="284.20" y="70.52" width="0.8" height="6" fill="#a8a0a0"/><rect x="289.30" y="98.47" width="1.80" height="2.93" fill="#f2d596"/><rect x="291.10" y="98.61" width="1.80" height="2.79" fill="#f5dca8"/><rect x="289.90" y="95.47" width="0.8" height="6" fill="#a8a0a0"/><rect x="291.70" y="95.61" width="0.8" height="6" fill="#a8a0a0"/><rect x="296.80" y="100.60" width="1.80" height="0.80" fill="#f2d596"/><rect x="298.60" y="100.60" width="1.80" height="0.80" fill="#f5dca8"/><rect x="297.40" y="97.60" width="0.8" height="6" fill="#a8a0a0"/><rect x="299.20" y="97.60" width="0.8" height="6" fill="#a8a0a0"/><rect x="304.30" y="83.10" width="1.80" height="18.30" fill="#f2d596"/><rect x="306.10" y="84.47" width="1.80" height="16.93" fill="#f5dca8"/><rect x="304.90" y="80.10" width="0.8" height="6" fill="#a8a0a0"/><rect x="306.70" y="81.47" width="0.8" height="6" fill="#a8a0a0"/><rect x="311.80" y="100.36" width="1.80" height="1.04" fill="#f2d596"/><rect x="313.60" y="100.48" width="1.80" height="0.92" fill="#f5dca8"/><rect x="312.40" y="97.36" width="0.8" height="6" fill="#a8a0a0"/><rect x="314.20" y="97.48" width="0.8" height="6" fill="#a8a0a0"/><rect x="258.3" y="101.4" width="58.1" height="0.6" fill="#d8d8d8"/><rect x="258.80" y="102.4" width="4.60" height="0.8" fill="#d8d8d8"/><rect x="266.30" y="102.4" width="4.60" height="0.8" fill="#d8d8d8"/><rect x="273.80" y="102.4" width="4.60" height="0.8" fill="#d8d8d8"/><rect x="281.30" y="102.4" width="4.60" height="0.8" fill="#d8d8d8"/><rect x="288.80" y="102.4" width="4.60" height="0.8" fill="#d8d8d8"/><rect x="296.30" y="102.4" width="4.60" height="0.8" fill="#d8d8d8"/><rect x="303.80" y="102.4" width="4.60" height="0.8" fill="#d8d8d8"/><rect x="311.30" y="102.4" width="4.60" height="0.8" fill="#d8d8d8"/><rect x="272.6" y="70.4" width="6" height="0.8" fill="#d0d0d0"/><rect x="280.6" y="70.4" width="8" height="0.8" fill="#d0d0d0"/><rect x="290.6" y="70.4" width="8" height="0.8" fill="#d0d0d0"/><rect x="258.3" y="104.0" width="5" height="0.7" fill="#d0d0d0"/><rect x="303.3" y="104.0" width="6" height="0.7" fill="#d0d0d0"/><rect x="340.3" y="100.8" width="5.2" height="0.8" fill="#d2d2d2"/><rect x="340.3" y="97.2" width="5.2" height="0.8" fill="#d2d2d2"/><rect x="340.3" y="93.6" width="5.2" height="0.8" fill="#d2d2d2"/><rect x="340.3" y="90.0" width="5.2" height="0.8" fill="#d2d2d2"/><rect x="340.3" y="86.4" width="5.2" height="0.8" fill="#d2d2d2"/><rect x="340.3" y="82.8" width="5.2" height="0.8" fill="#d2d2d2"/><rect x="340.3" y="79.2" width="5.2" height="0.8" fill="#d2d2d2"/><rect x="340.3" y="75.6" width="5.2" height="0.8" fill="#d2d2d2"/><rect x="348.30" y="89.16" width="2.65" height="12.04" fill="#eda94a"/><rect x="350.95" y="89.33" width="2.65" height="11.87" fill="#f6c86a"/><rect x="348.30" y="90" width="5.30" height="0.7" fill="#fff" opacity="0.55"/><rect x="348.30" y="92" width="5.30" height="0.7" fill="#fff" opacity="0.55"/><rect x="348.30" y="94" width="5.30" height="0.7" fill="#fff" opacity="0.55"/><rect x="348.30" y="96" width="5.30" height="0.7" fill="#fff" opacity="0.55"/><rect x="348.30" y="98" width="5.30" height="0.7" fill="#fff" opacity="0.55"/><rect x="348.30" y="100" width="5.30" height="0.7" fill="#fff" opacity="0.55"/><rect x="355.30" y="90.03" width="2.65" height="11.17" fill="#eda94a"/><rect x="357.95" y="90.58" width="2.65" height="10.62" fill="#f6c86a"/><rect x="355.30" y="91" width="5.30" height="0.7" fill="#fff" opacity="0.55"/><rect x="355.30" y="93" width="5.30" height="0.7" fill="#fff" opacity="0.55"/><rect x="355.30" y="95" width="5.30" height="0.7" fill="#fff" opacity="0.55"/><rect x="355.30" y="97" width="5.30" height="0.7" fill="#fff" opacity="0.55"/><rect x="355.30" y="99" width="5.30" height="0.7" fill="#fff" opacity="0.55"/><rect x="362.30" y="87.44" width="2.65" height="13.76" fill="#eda94a"/><rect x="364.95" y="88.11" width="2.65" height="13.09" fill="#f6c86a"/><rect x="362.30" y="88" width="5.30" height="0.7" fill="#fff" opacity="0.55"/><rect x="362.30" y="90" width="5.30" height="0.7" fill="#fff" opacity="0.55"/><rect x="362.30" y="92" width="5.30" height="0.7" fill="#fff" opacity="0.55"/><rect x="362.30" y="94" width="5.30" height="0.7" fill="#fff" opacity="0.55"/><rect x="362.30" y="96" width="5.30" height="0.7" fill="#fff" opacity="0.55"/><rect x="362.30" y="98" width="5.30" height="0.7" fill="#fff" opacity="0.55"/><rect x="362.30" y="100" width="5.30" height="0.7" fill="#fff" opacity="0.55"/><rect x="369.30" y="76.00" width="2.65" height="25.20" fill="#eda94a"/><rect x="371.95" y="76.97" width="2.65" height="24.23" fill="#f6c86a"/><rect x="369.30" y="77" width="5.30" height="0.7" fill="#fff" opacity="0.55"/><rect x="369.30" y="79" width="5.30" height="0.7" fill="#fff" opacity="0.55"/><rect x="369.30" y="81" width="5.30" height="0.7" fill="#fff" opacity="0.55"/><rect x="369.30" y="83" width="5.30" height="0.7" fill="#fff" opacity="0.55"/><rect x="369.30" y="85" width="5.30" height="0.7" fill="#fff" opacity="0.55"/><rect x="369.30" y="87" width="5.30" height="0.7" fill="#fff" opacity="0.55"/><rect x="369.30" y="89" width="5.30" height="0.7" fill="#fff" opacity="0.55"/><rect x="369.30" y="91" width="5.30" height="0.7" fill="#fff" opacity="0.55"/><rect x="369.30" y="93" width="5.30" height="0.7" fill="#fff" opacity="0.55"/><rect x="369.30" y="95" width="5.30" height="0.7" fill="#fff" opacity="0.55"/><rect x="369.30" y="97" width="5.30" height="0.7" fill="#fff" opacity="0.55"/><rect x="369.30" y="99" width="5.30" height="0.7" fill="#fff" opacity="0.55"/><rect x="376.30" y="98.66" width="2.65" height="2.54" fill="#eda94a"/><rect x="378.95" y="98.78" width="2.65" height="2.42" fill="#f6c86a"/><rect x="376.30" y="99" width="5.30" height="0.7" fill="#fff" opacity="0.55"/><rect x="383.30" y="100.40" width="2.65" height="0.80" fill="#eda94a"/><rect x="385.95" y="100.40" width="2.65" height="0.80" fill="#f6c86a"/><rect x="390.30" y="85.30" width="2.65" height="15.90" fill="#eda94a"/><rect x="392.95" y="86.48" width="2.65" height="14.72" fill="#f6c86a"/><rect x="390.30" y="86" width="5.30" height="0.7" fill="#fff" opacity="0.55"/><rect x="390.30" y="88" width="5.30" height="0.7" fill="#fff" opacity="0.55"/><rect x="390.30" y="90" width="5.30" height="0.7" fill="#fff" opacity="0.55"/><rect x="390.30" y="92" width="5.30" height="0.7" fill="#fff" opacity="0.55"/><rect x="390.30" y="94" width="5.30" height="0.7" fill="#fff" opacity="0.55"/><rect x="390.30" y="96" width="5.30" height="0.7" fill="#fff" opacity="0.55"/><rect x="390.30" y="98" width="5.30" height="0.7" fill="#fff" opacity="0.55"/><rect x="390.30" y="100" width="5.30" height="0.7" fill="#fff" opacity="0.55"/><rect x="397.30" y="100.30" width="2.65" height="0.90" fill="#eda94a"/><rect x="399.95" y="100.40" width="2.65" height="0.80" fill="#f6c86a"/><rect x="347.3" y="101.2" width="56.3" height="0.6" fill="#d8d8d8"/><rect x="347.80" y="102.2" width="6.30" height="0.8" fill="#d8d8d8"/><rect x="354.80" y="102.2" width="6.30" height="0.8" fill="#d8d8d8"/><rect x="361.80" y="102.2" width="6.30" height="0.8" fill="#d8d8d8"/><rect x="368.80" y="102.2" width="6.30" height="0.8" fill="#d8d8d8"/><rect x="375.80" y="102.2" width="6.30" height="0.8" fill="#d8d8d8"/><rect x="382.80" y="102.2" width="6.30" height="0.8" fill="#d8d8d8"/><rect x="389.80" y="102.2" width="6.30" height="0.8" fill="#d8d8d8"/><rect x="396.80" y="102.2" width="6.30" height="0.8" fill="#d8d8d8"/><rect x="359.8" y="74.0" width="6" height="0.8" fill="#d0d0d0"/><rect x="367.8" y="74.0" width="8" height="0.8" fill="#d0d0d0"/><rect x="377.8" y="74.0" width="8" height="0.8" fill="#d0d0d0"/><rect x="347.3" y="103.8" width="5" height="0.7" fill="#d0d0d0"/><rect x="389.3" y="103.8" width="6" height="0.7" fill="#d0d0d0"/><defs><linearGradient id="gg42271" x1="0" x2="1" y1="0" y2="0"><stop offset="0" stop-color="#c6c6c6"/><stop offset="0.45" stop-color="#efefef"/><stop offset="1" stop-color="#c4c4c4"/></linearGradient></defs><rect x="422.0" y="71.3" width="75.7" height="32.5" fill="url(#gg42271)"/><rect x="424.00" y="86.40" width="3.30" height="10.80" fill="#eea030"/><rect x="427.30" y="86.55" width="3.30" height="10.65" fill="#f7c24c"/><rect x="431.50" y="87.18" width="3.30" height="10.02" fill="#eea030"/><rect x="434.80" y="87.68" width="3.30" height="9.52" fill="#f7c24c"/><rect x="439.00" y="84.86" width="3.30" height="12.34" fill="#eea030"/><rect x="442.30" y="85.46" width="3.30" height="11.74" fill="#f7c24c"/><rect x="446.50" y="74.60" width="3.30" height="22.60" fill="#eea030"/><rect x="449.80" y="75.47" width="3.30" height="21.73" fill="#f7c24c"/><rect x="454.00" y="94.92" width="3.30" height="2.28" fill="#eea030"/><rect x="457.30" y="95.03" width="3.30" height="2.17" fill="#f7c24c"/><rect x="461.50" y="96.40" width="3.30" height="0.80" fill="#eea030"/><rect x="464.80" y="96.40" width="3.30" height="0.80" fill="#f7c24c"/><rect x="469.00" y="82.94" width="3.30" height="14.26" fill="#eea030"/><rect x="472.30" y="84.00" width="3.30" height="13.20" fill="#f7c24c"/><rect x="476.50" y="96.39" width="3.30" height="0.81" fill="#eea030"/><rect x="479.80" y="96.40" width="3.30" height="0.80" fill="#f7c24c"/><rect x="423.0" y="97.2" width="61.1" height="0.6" fill="#d8d8d8"/><rect x="423.50" y="98.2" width="7.60" height="0.8" fill="#d8d8d8"/><rect x="431.00" y="98.2" width="7.60" height="0.8" fill="#d8d8d8"/><rect x="438.50" y="98.2" width="7.60" height="0.8" fill="#d8d8d8"/><rect x="446.00" y="98.2" width="7.60" height="0.8" fill="#d8d8d8"/><rect x="453.50" y="98.2" width="7.60" height="0.8" fill="#d8d8d8"/><rect x="461.00" y="98.2" width="7.60" height="0.8" fill="#d8d8d8"/><rect x="468.50" y="98.2" width="7.60" height="0.8" fill="#d8d8d8"/><rect x="476.00" y="98.2" width="7.60" height="0.8" fill="#d8d8d8"/><rect x="437.2" y="101.5" width="6" height="0.8" fill="#d0d0d0"/><rect x="445.2" y="101.5" width="8" height="0.8" fill="#d0d0d0"/><rect x="455.2" y="101.5" width="8" height="0.8" fill="#d0d0d0"/><rect x="423.0" y="99.8" width="5" height="0.7" fill="#d0d0d0"/><rect x="468.0" y="99.8" width="6" height="0.7" fill="#d0d0d0"/><rect x="505.6" y="97.5" width="5.2" height="0.8" fill="#d2d2d2"/><rect x="505.6" y="94.1" width="5.2" height="0.8" fill="#d2d2d2"/><rect x="505.6" y="90.7" width="5.2" height="0.8" fill="#d2d2d2"/><rect x="505.6" y="87.3" width="5.2" height="0.8" fill="#d2d2d2"/><rect x="505.6" y="83.8" width="5.2" height="0.8" fill="#d2d2d2"/><rect x="505.6" y="80.4" width="5.2" height="0.8" fill="#d2d2d2"/><rect x="505.6" y="77.0" width="5.2" height="0.8" fill="#d2d2d2"/><rect x="505.6" y="73.6" width="5.2" height="0.8" fill="#d2d2d2"/><rect x="513.60" y="86.48" width="2.70" height="11.42" fill="#f3c096"/><rect x="516.30" y="86.64" width="2.70" height="11.26" fill="#f6d0b0"/><rect x="520.20" y="87.31" width="2.70" height="10.59" fill="#f3c096"/><rect x="522.90" y="87.83" width="2.70" height="10.07" fill="#f6d0b0"/><rect x="526.80" y="84.85" width="2.70" height="13.05" fill="#f3c096"/><rect x="529.50" y="85.48" width="2.70" height="12.42" fill="#f6d0b0"/><rect x="533.40" y="74.00" width="2.70" height="23.90" fill="#f3c096"/><rect x="536.10" y="74.92" width="2.70" height="22.98" fill="#f6d0b0"/><rect x="540.00" y="95.49" width="2.70" height="2.41" fill="#f3c096"/><rect x="542.70" y="95.60" width="2.70" height="2.30" fill="#f6d0b0"/><rect x="546.60" y="97.10" width="2.70" height="0.80" fill="#f3c096"/><rect x="549.30" y="97.10" width="2.70" height="0.80" fill="#f6d0b0"/><rect x="553.20" y="82.82" width="2.70" height="15.08" fill="#f3c096"/><rect x="555.90" y="83.94" width="2.70" height="13.96" fill="#f6d0b0"/><rect x="559.80" y="97.04" width="2.70" height="0.86" fill="#f3c096"/><rect x="562.50" y="97.10" width="2.70" height="0.80" fill="#f6d0b0"/><rect x="512.6" y="97.9" width="53.6" height="0.6" fill="#d8d8d8"/><rect x="513.10" y="98.9" width="6.40" height="0.8" fill="#d8d8d8"/><rect x="519.70" y="98.9" width="6.40" height="0.8" fill="#d8d8d8"/><rect x="526.30" y="98.9" width="6.40" height="0.8" fill="#d8d8d8"/><rect x="532.90" y="98.9" width="6.40" height="0.8" fill="#d8d8d8"/><rect x="539.50" y="98.9" width="6.40" height="0.8" fill="#d8d8d8"/><rect x="546.10" y="98.9" width="6.40" height="0.8" fill="#d8d8d8"/><rect x="552.70" y="98.9" width="6.40" height="0.8" fill="#d8d8d8"/><rect x="559.30" y="98.9" width="6.40" height="0.8" fill="#d8d8d8"/><rect x="523.7" y="102.2" width="6" height="0.8" fill="#d0d0d0"/><rect x="531.7" y="102.2" width="8" height="0.8" fill="#d0d0d0"/><rect x="541.7" y="102.2" width="8" height="0.8" fill="#d0d0d0"/><rect x="512.6" y="100.5" width="5" height="0.7" fill="#d0d0d0"/><rect x="552.2" y="100.5" width="6" height="0.7" fill="#d0d0d0"/><rect x="588.6" y="97.5" width="5.2" height="0.8" fill="#d2d2d2"/><rect x="588.6" y="94.1" width="5.2" height="0.8" fill="#d2d2d2"/><rect x="588.6" y="90.7" width="5.2" height="0.8" fill="#d2d2d2"/><rect x="588.6" y="87.3" width="5.2" height="0.8" fill="#d2d2d2"/><rect x="588.6" y="83.8" width="5.2" height="0.8" fill="#d2d2d2"/><rect x="588.6" y="80.4" width="5.2" height="0.8" fill="#d2d2d2"/><rect x="588.6" y="77.0" width="5.2" height="0.8" fill="#d2d2d2"/><rect x="588.6" y="73.6" width="5.2" height="0.8" fill="#d2d2d2"/><rect x="596.60" y="86.48" width="2.35" height="11.42" fill="#eba444"/><rect x="598.95" y="86.64" width="2.35" height="11.26" fill="#f4c466"/><rect x="603.20" y="87.31" width="2.35" height="10.59" fill="#eba444"/><rect x="605.55" y="87.83" width="2.35" height="10.07" fill="#f4c466"/><rect x="609.80" y="84.85" width="2.35" height="13.05" fill="#eba444"/><rect x="612.15" y="85.48" width="2.35" height="12.42" fill="#f4c466"/><rect x="616.40" y="74.00" width="2.35" height="23.90" fill="#eba444"/><rect x="618.75" y="74.92" width="2.35" height="22.98" fill="#f4c466"/><rect x="623.00" y="95.49" width="2.35" height="2.41" fill="#eba444"/><rect x="625.35" y="95.60" width="2.35" height="2.30" fill="#f4c466"/><rect x="629.60" y="97.10" width="2.35" height="0.80" fill="#eba444"/><rect x="631.95" y="97.10" width="2.35" height="0.80" fill="#f4c466"/><rect x="636.20" y="82.82" width="2.35" height="15.08" fill="#eba444"/><rect x="638.55" y="83.94" width="2.35" height="13.96" fill="#f4c466"/><rect x="642.80" y="97.04" width="2.35" height="0.86" fill="#eba444"/><rect x="645.15" y="97.10" width="2.35" height="0.80" fill="#f4c466"/><rect x="595.6" y="97.9" width="52.9" height="0.6" fill="#d8d8d8"/><rect x="596.10" y="98.9" width="5.70" height="0.8" fill="#d8d8d8"/><rect x="602.70" y="98.9" width="5.70" height="0.8" fill="#d8d8d8"/><rect x="609.30" y="98.9" width="5.70" height="0.8" fill="#d8d8d8"/><rect x="615.90" y="98.9" width="5.70" height="0.8" fill="#d8d8d8"/><rect x="622.50" y="98.9" width="5.70" height="0.8" fill="#d8d8d8"/><rect x="629.10" y="98.9" width="5.70" height="0.8" fill="#d8d8d8"/><rect x="635.70" y="98.9" width="5.70" height="0.8" fill="#d8d8d8"/><rect x="642.30" y="98.9" width="5.70" height="0.8" fill="#d8d8d8"/><rect x="606.7" y="102.2" width="6" height="0.8" fill="#d0d0d0"/><rect x="614.7" y="102.2" width="8" height="0.8" fill="#d0d0d0"/><rect x="624.7" y="102.2" width="8" height="0.8" fill="#d0d0d0"/><rect x="595.6" y="100.5" width="5" height="0.7" fill="#d0d0d0"/><rect x="635.2" y="100.5" width="6" height="0.7" fill="#d0d0d0"/><clipPath id="hc67170"><rect x="677" y="72" width="69.7" height="25.9"/></clipPath><path d="M644.0,70.7 L670.0,96.7M648.5,70.7 L674.5,96.7M653.0,70.7 L679.0,96.7M657.5,70.7 L683.5,96.7M662.0,70.7 L688.0,96.7M666.5,70.7 L692.5,96.7M671.0,70.7 L697.0,96.7M675.5,70.7 L701.5,96.7M680.0,70.7 L706.0,96.7M684.5,70.7 L710.5,96.7M689.0,70.7 L715.0,96.7M693.5,70.7 L719.5,96.7M698.0,70.7 L724.0,96.7M702.5,70.7 L728.5,96.7M707.0,70.7 L733.0,96.7M711.5,70.7 L737.5,96.7M716.0,70.7 L742.0,96.7M720.5,70.7 L746.5,96.7M725.0,70.7 L751.0,96.7M729.5,70.7 L755.5,96.7M734.0,70.7 L760.0,96.7M738.5,70.7 L764.5,96.7M743.0,70.7 L769.0,96.7" stroke="#dadada" stroke-width="0.8" clip-path="url(#hc67170)"/><rect x="671.6" y="97.5" width="5.2" height="0.8" fill="#d2d2d2"/><rect x="671.6" y="94.1" width="5.2" height="0.8" fill="#d2d2d2"/><rect x="671.6" y="90.7" width="5.2" height="0.8" fill="#d2d2d2"/><rect x="671.6" y="87.3" width="5.2" height="0.8" fill="#d2d2d2"/><rect x="671.6" y="83.8" width="5.2" height="0.8" fill="#d2d2d2"/><rect x="671.6" y="80.4" width="5.2" height="0.8" fill="#d2d2d2"/><rect x="671.6" y="77.0" width="5.2" height="0.8" fill="#d2d2d2"/><rect x="671.6" y="73.6" width="5.2" height="0.8" fill="#d2d2d2"/><rect x="679.60" y="86.48" width="2.35" height="11.42" fill="#eba444"/><rect x="681.95" y="86.64" width="2.35" height="11.26" fill="#f4c466"/><rect x="686.20" y="87.31" width="2.35" height="10.59" fill="#eba444"/><rect x="688.55" y="87.83" width="2.35" height="10.07" fill="#f4c466"/><rect x="692.80" y="84.85" width="2.35" height="13.05" fill="#eba444"/><rect x="695.15" y="85.48" width="2.35" height="12.42" fill="#f4c466"/><rect x="699.40" y="74.00" width="2.35" height="23.90" fill="#eba444"/><rect x="701.75" y="74.92" width="2.35" height="22.98" fill="#f4c466"/><rect x="706.00" y="95.49" width="2.35" height="2.41" fill="#eba444"/><rect x="708.35" y="95.60" width="2.35" height="2.30" fill="#f4c466"/><rect x="712.60" y="97.10" width="2.35" height="0.80" fill="#eba444"/><rect x="714.95" y="97.10" width="2.35" height="0.80" fill="#f4c466"/><rect x="719.20" y="82.82" width="2.35" height="15.08" fill="#eba444"/><rect x="721.55" y="83.94" width="2.35" height="13.96" fill="#f4c466"/><rect x="725.80" y="97.04" width="2.35" height="0.86" fill="#eba444"/><rect x="728.15" y="97.10" width="2.35" height="0.80" fill="#f4c466"/><rect x="678.6" y="97.9" width="52.9" height="0.6" fill="#d8d8d8"/><rect x="679.10" y="98.9" width="5.70" height="0.8" fill="#d8d8d8"/><rect x="685.70" y="98.9" width="5.70" height="0.8" fill="#d8d8d8"/><rect x="692.30" y="98.9" width="5.70" height="0.8" fill="#d8d8d8"/><rect x="698.90" y="98.9" width="5.70" height="0.8" fill="#d8d8d8"/><rect x="705.50" y="98.9" width="5.70" height="0.8" fill="#d8d8d8"/><rect x="712.10" y="98.9" width="5.70" height="0.8" fill="#d8d8d8"/><rect x="718.70" y="98.9" width="5.70" height="0.8" fill="#d8d8d8"/><rect x="725.30" y="98.9" width="5.70" height="0.8" fill="#d8d8d8"/><rect x="689.7" y="102.2" width="6" height="0.8" fill="#d0d0d0"/><rect x="697.7" y="102.2" width="8" height="0.8" fill="#d0d0d0"/><rect x="707.7" y="102.2" width="8" height="0.8" fill="#d0d0d0"/><rect x="678.6" y="100.5" width="5" height="0.7" fill="#d0d0d0"/><rect x="718.2" y="100.5" width="6" height="0.7" fill="#d0d0d0"/><rect x="754.0" y="71.0" width="75.5" height="32.6" fill="#383838"/><rect x="753.7" y="97.8" width="5.2" height="0.8" fill="#9a9a9a"/><rect x="753.7" y="94.2" width="5.2" height="0.8" fill="#9a9a9a"/><rect x="753.7" y="90.7" width="5.2" height="0.8" fill="#9a9a9a"/><rect x="753.7" y="87.1" width="5.2" height="0.8" fill="#9a9a9a"/><rect x="753.7" y="83.5" width="5.2" height="0.8" fill="#9a9a9a"/><rect x="753.7" y="79.9" width="5.2" height="0.8" fill="#9a9a9a"/><rect x="753.7" y="76.4" width="5.2" height="0.8" fill="#9a9a9a"/><rect x="753.7" y="72.8" width="5.2" height="0.8" fill="#9a9a9a"/><rect x="761.70" y="86.26" width="3.00" height="11.94" fill="#e08a2a"/><rect x="764.70" y="86.42" width="3.00" height="11.78" fill="#f5c040"/><rect x="768.40" y="87.12" width="3.00" height="11.08" fill="#e08a2a"/><rect x="771.40" y="87.67" width="3.00" height="10.53" fill="#f5c040"/><rect x="775.10" y="84.55" width="3.00" height="13.65" fill="#e08a2a"/><rect x="778.10" y="85.21" width="3.00" height="12.99" fill="#f5c040"/><rect x="781.80" y="73.20" width="3.00" height="25.00" fill="#e08a2a"/><rect x="784.80" y="74.16" width="3.00" height="24.04" fill="#f5c040"/><rect x="788.50" y="95.68" width="3.00" height="2.52" fill="#e08a2a"/><rect x="791.50" y="95.79" width="3.00" height="2.41" fill="#f5c040"/><rect x="795.20" y="97.40" width="3.00" height="0.80" fill="#e08a2a"/><rect x="798.20" y="97.40" width="3.00" height="0.80" fill="#f5c040"/><rect x="801.90" y="82.42" width="3.00" height="15.78" fill="#e08a2a"/><rect x="804.90" y="83.60" width="3.00" height="14.60" fill="#f5c040"/><rect x="808.60" y="97.30" width="3.00" height="0.90" fill="#e08a2a"/><rect x="811.60" y="97.40" width="3.00" height="0.80" fill="#f5c040"/><rect x="760.7" y="98.2" width="54.9" height="0.6" fill="#6a6a6a"/><rect x="761.20" y="99.2" width="7.00" height="0.8" fill="#6a6a6a"/><rect x="767.90" y="99.2" width="7.00" height="0.8" fill="#6a6a6a"/><rect x="774.60" y="99.2" width="7.00" height="0.8" fill="#6a6a6a"/><rect x="781.30" y="99.2" width="7.00" height="0.8" fill="#6a6a6a"/><rect x="788.00" y="99.2" width="7.00" height="0.8" fill="#6a6a6a"/><rect x="794.70" y="99.2" width="7.00" height="0.8" fill="#6a6a6a"/><rect x="801.40" y="99.2" width="7.00" height="0.8" fill="#6a6a6a"/><rect x="808.10" y="99.2" width="7.00" height="0.8" fill="#6a6a6a"/><rect x="772.2" y="102.5" width="6" height="0.8" fill="#8a8a8a"/><rect x="780.2" y="102.5" width="8" height="0.8" fill="#8a8a8a"/><rect x="790.2" y="102.5" width="8" height="0.8" fill="#8a8a8a"/><rect x="760.7" y="100.8" width="5" height="0.7" fill="#8a8a8a"/><rect x="800.9" y="100.8" width="6" height="0.7" fill="#8a8a8a"/><rect x="174.6" y="147.8" width="5.2" height="0.8" fill="#d2d2d2"/><rect x="174.6" y="144.7" width="5.2" height="0.8" fill="#d2d2d2"/><rect x="174.6" y="141.5" width="5.2" height="0.8" fill="#d2d2d2"/><rect x="174.6" y="138.4" width="5.2" height="0.8" fill="#d2d2d2"/><rect x="174.6" y="135.3" width="5.2" height="0.8" fill="#d2d2d2"/><rect x="174.6" y="132.2" width="5.2" height="0.8" fill="#d2d2d2"/><rect x="174.6" y="129.0" width="5.2" height="0.8" fill="#d2d2d2"/><rect x="174.6" y="125.9" width="5.2" height="0.8" fill="#d2d2d2"/><rect x="182.60" y="137.74" width="1.80" height="10.46" fill="#f1d29c"/><rect x="184.40" y="137.88" width="1.80" height="10.32" fill="#f6e0b6"/><rect x="189.20" y="138.49" width="1.80" height="9.71" fill="#f1d29c"/><rect x="191.00" y="138.97" width="1.80" height="9.23" fill="#f6e0b6"/><rect x="195.80" y="136.24" width="1.80" height="11.96" fill="#f1d29c"/><rect x="197.60" y="136.82" width="1.80" height="11.38" fill="#f6e0b6"/><rect x="202.40" y="126.30" width="1.80" height="21.90" fill="#f1d29c"/><rect x="204.20" y="127.14" width="1.80" height="21.06" fill="#f6e0b6"/><rect x="209.00" y="145.99" width="1.80" height="2.21" fill="#f1d29c"/><rect x="210.80" y="146.09" width="1.80" height="2.11" fill="#f6e0b6"/><rect x="215.60" y="147.40" width="1.80" height="0.80" fill="#f1d29c"/><rect x="217.40" y="147.40" width="1.80" height="0.80" fill="#f6e0b6"/><rect x="222.20" y="134.38" width="1.80" height="13.82" fill="#f1d29c"/><rect x="224.00" y="135.41" width="1.80" height="12.79" fill="#f6e0b6"/><rect x="228.80" y="147.40" width="1.80" height="0.80" fill="#f1d29c"/><rect x="230.60" y="147.40" width="1.80" height="0.80" fill="#f6e0b6"/><rect x="181.6" y="148.2" width="51.8" height="0.6" fill="#d8d8d8"/><rect x="182.10" y="149.2" width="4.60" height="0.8" fill="#d8d8d8"/><rect x="188.70" y="149.2" width="4.60" height="0.8" fill="#d8d8d8"/><rect x="195.30" y="149.2" width="4.60" height="0.8" fill="#d8d8d8"/><rect x="201.90" y="149.2" width="4.60" height="0.8" fill="#d8d8d8"/><rect x="208.50" y="149.2" width="4.60" height="0.8" fill="#d8d8d8"/><rect x="215.10" y="149.2" width="4.60" height="0.8" fill="#d8d8d8"/><rect x="221.70" y="149.2" width="4.60" height="0.8" fill="#d8d8d8"/><rect x="228.30" y="149.2" width="4.60" height="0.8" fill="#d8d8d8"/><rect x="192.7" y="152.5" width="6" height="0.8" fill="#d0d0d0"/><rect x="200.7" y="152.5" width="8" height="0.8" fill="#d0d0d0"/><rect x="210.7" y="152.5" width="8" height="0.8" fill="#d0d0d0"/><rect x="181.6" y="150.8" width="5" height="0.7" fill="#d0d0d0"/><rect x="221.2" y="150.8" width="6" height="0.7" fill="#d0d0d0"/><rect x="257.0" y="151.8" width="5.2" height="0.8" fill="#d2d2d2"/><rect x="257.0" y="148.4" width="5.2" height="0.8" fill="#d2d2d2"/><rect x="257.0" y="145.0" width="5.2" height="0.8" fill="#d2d2d2"/><rect x="257.0" y="141.6" width="5.2" height="0.8" fill="#d2d2d2"/><rect x="257.0" y="138.1" width="5.2" height="0.8" fill="#d2d2d2"/><rect x="257.0" y="134.7" width="5.2" height="0.8" fill="#d2d2d2"/><rect x="257.0" y="131.3" width="5.2" height="0.8" fill="#d2d2d2"/><rect x="257.0" y="127.9" width="5.2" height="0.8" fill="#d2d2d2"/><rect x="265.00" y="140.78" width="2.30" height="11.42" fill="#f3e6c8"/><rect x="267.30" y="140.94" width="2.30" height="11.26" fill="#f6ecd6"/><rect x="271.60" y="141.61" width="2.30" height="10.59" fill="#f3e6c8"/><rect x="273.90" y="142.13" width="2.30" height="10.07" fill="#f6ecd6"/><rect x="278.20" y="139.15" width="2.30" height="13.05" fill="#f3e6c8"/><rect x="280.50" y="139.78" width="2.30" height="12.42" fill="#f6ecd6"/><rect x="284.80" y="128.30" width="2.30" height="23.90" fill="#f3e6c8"/><rect x="287.10" y="129.22" width="2.30" height="22.98" fill="#f6ecd6"/><rect x="291.40" y="149.79" width="2.30" height="2.41" fill="#f3e6c8"/><rect x="293.70" y="149.90" width="2.30" height="2.30" fill="#f6ecd6"/><rect x="298.00" y="151.40" width="2.30" height="0.80" fill="#f3e6c8"/><rect x="300.30" y="151.40" width="2.30" height="0.80" fill="#f6ecd6"/><rect x="304.60" y="137.12" width="2.30" height="15.08" fill="#f3e6c8"/><rect x="306.90" y="138.24" width="2.30" height="13.96" fill="#f6ecd6"/><rect x="311.20" y="151.34" width="2.30" height="0.86" fill="#f3e6c8"/><rect x="313.50" y="151.40" width="2.30" height="0.80" fill="#f6ecd6"/><rect x="264.0" y="152.2" width="52.8" height="0.6" fill="#d8d8d8"/><rect x="264.50" y="153.2" width="5.60" height="0.8" fill="#d8d8d8"/><rect x="271.10" y="153.2" width="5.60" height="0.8" fill="#d8d8d8"/><rect x="277.70" y="153.2" width="5.60" height="0.8" fill="#d8d8d8"/><rect x="284.30" y="153.2" width="5.60" height="0.8" fill="#d8d8d8"/><rect x="290.90" y="153.2" width="5.60" height="0.8" fill="#d8d8d8"/><rect x="297.50" y="153.2" width="5.60" height="0.8" fill="#d8d8d8"/><rect x="304.10" y="153.2" width="5.60" height="0.8" fill="#d8d8d8"/><rect x="310.70" y="153.2" width="5.60" height="0.8" fill="#d8d8d8"/><rect x="275.1" y="126.3" width="6" height="0.8" fill="#d0d0d0"/><rect x="283.1" y="126.3" width="8" height="0.8" fill="#d0d0d0"/><rect x="293.1" y="126.3" width="8" height="0.8" fill="#d0d0d0"/><rect x="264.0" y="154.8" width="5" height="0.7" fill="#d0d0d0"/><rect x="303.6" y="154.8" width="6" height="0.7" fill="#d0d0d0"/><rect x="340.3" y="151.5" width="5.2" height="0.8" fill="#d2d2d2"/><rect x="340.3" y="148.3" width="5.2" height="0.8" fill="#d2d2d2"/><rect x="340.3" y="145.0" width="5.2" height="0.8" fill="#d2d2d2"/><rect x="340.3" y="141.8" width="5.2" height="0.8" fill="#d2d2d2"/><rect x="340.3" y="138.6" width="5.2" height="0.8" fill="#d2d2d2"/><rect x="340.3" y="135.4" width="5.2" height="0.8" fill="#d2d2d2"/><rect x="340.3" y="132.1" width="5.2" height="0.8" fill="#d2d2d2"/><rect x="340.3" y="128.9" width="5.2" height="0.8" fill="#d2d2d2"/><rect x="348.30" y="141.10" width="2.00" height="10.80" fill="#eba444"/><rect x="350.30" y="141.25" width="2.00" height="10.65" fill="#f4c466"/><rect x="354.90" y="141.88" width="2.00" height="10.02" fill="#eba444"/><rect x="356.90" y="142.38" width="2.00" height="9.52" fill="#f4c466"/><rect x="361.50" y="139.56" width="2.00" height="12.34" fill="#eba444"/><rect x="363.50" y="140.16" width="2.00" height="11.74" fill="#f4c466"/><rect x="368.10" y="129.30" width="2.00" height="22.60" fill="#eba444"/><rect x="370.10" y="130.17" width="2.00" height="21.73" fill="#f4c466"/><rect x="374.70" y="149.62" width="2.00" height="2.28" fill="#eba444"/><rect x="376.70" y="149.73" width="2.00" height="2.17" fill="#f4c466"/><rect x="381.30" y="151.10" width="2.00" height="0.80" fill="#eba444"/><rect x="383.30" y="151.10" width="2.00" height="0.80" fill="#f4c466"/><rect x="387.90" y="137.64" width="2.00" height="14.26" fill="#eba444"/><rect x="389.90" y="138.70" width="2.00" height="13.20" fill="#f4c466"/><rect x="394.50" y="151.09" width="2.00" height="0.81" fill="#eba444"/><rect x="396.50" y="151.10" width="2.00" height="0.80" fill="#f4c466"/><rect x="347.3" y="151.9" width="52.2" height="0.6" fill="#d8d8d8"/><rect x="347.80" y="152.9" width="5.00" height="0.8" fill="#d8d8d8"/><rect x="354.40" y="152.9" width="5.00" height="0.8" fill="#d8d8d8"/><rect x="361.00" y="152.9" width="5.00" height="0.8" fill="#d8d8d8"/><rect x="367.60" y="152.9" width="5.00" height="0.8" fill="#d8d8d8"/><rect x="374.20" y="152.9" width="5.00" height="0.8" fill="#d8d8d8"/><rect x="380.80" y="152.9" width="5.00" height="0.8" fill="#d8d8d8"/><rect x="387.40" y="152.9" width="5.00" height="0.8" fill="#d8d8d8"/><rect x="394.00" y="152.9" width="5.00" height="0.8" fill="#d8d8d8"/><rect x="358.4" y="127.3" width="6" height="0.8" fill="#d0d0d0"/><rect x="366.4" y="127.3" width="8" height="0.8" fill="#d0d0d0"/><rect x="376.4" y="127.3" width="8" height="0.8" fill="#d0d0d0"/><rect x="347.3" y="154.5" width="5" height="0.7" fill="#d0d0d0"/><rect x="386.9" y="154.5" width="6" height="0.7" fill="#d0d0d0"/><rect x="422.0" y="123.6" width="75.7" height="32.9" fill="#434343"/><rect x="423.0" y="151.1" width="5.2" height="0.8" fill="#9a9a9a"/><rect x="423.0" y="147.7" width="5.2" height="0.8" fill="#9a9a9a"/><rect x="423.0" y="144.2" width="5.2" height="0.8" fill="#9a9a9a"/><rect x="423.0" y="140.8" width="5.2" height="0.8" fill="#9a9a9a"/><rect x="423.0" y="137.4" width="5.2" height="0.8" fill="#9a9a9a"/><rect x="423.0" y="134.0" width="5.2" height="0.8" fill="#9a9a9a"/><rect x="423.0" y="130.5" width="5.2" height="0.8" fill="#9a9a9a"/><rect x="423.0" y="127.1" width="5.2" height="0.8" fill="#9a9a9a"/><rect x="431.00" y="140.03" width="2.00" height="11.47" fill="none" stroke="#7a6a50" stroke-width="0.5"/><rect x="433.00" y="140.19" width="2.00" height="11.31" fill="none" stroke="#6f6a5a" stroke-width="0.5"/><rect x="437.80" y="140.86" width="2.00" height="10.64" fill="none" stroke="#7a6a50" stroke-width="0.5"/><rect x="439.80" y="141.39" width="2.00" height="10.11" fill="none" stroke="#6f6a5a" stroke-width="0.5"/><rect x="444.60" y="138.39" width="2.00" height="13.11" fill="none" stroke="#7a6a50" stroke-width="0.5"/><rect x="446.60" y="139.03" width="2.00" height="12.47" fill="none" stroke="#6f6a5a" stroke-width="0.5"/><rect x="451.40" y="127.50" width="2.00" height="24.00" fill="none" stroke="#7a6a50" stroke-width="0.5"/><rect x="453.40" y="128.42" width="2.00" height="23.08" fill="none" stroke="#6f6a5a" stroke-width="0.5"/><rect x="458.20" y="149.08" width="2.00" height="2.42" fill="none" stroke="#7a6a50" stroke-width="0.5"/><rect x="460.20" y="149.19" width="2.00" height="2.31" fill="none" stroke="#6f6a5a" stroke-width="0.5"/><rect x="465.00" y="150.70" width="2.00" height="0.80" fill="none" stroke="#7a6a50" stroke-width="0.5"/><rect x="467.00" y="150.70" width="2.00" height="0.80" fill="none" stroke="#6f6a5a" stroke-width="0.5"/><rect x="471.80" y="136.35" width="2.00" height="15.15" fill="none" stroke="#7a6a50" stroke-width="0.5"/><rect x="473.80" y="137.49" width="2.00" height="14.01" fill="none" stroke="#6f6a5a" stroke-width="0.5"/><rect x="478.60" y="150.64" width="2.00" height="0.86" fill="none" stroke="#7a6a50" stroke-width="0.5"/><rect x="480.60" y="150.70" width="2.00" height="0.80" fill="none" stroke="#6f6a5a" stroke-width="0.5"/><rect x="430.0" y="151.5" width="53.6" height="0.6" fill="#6a6a6a"/><rect x="430.50" y="152.5" width="5.00" height="0.8" fill="#6a6a6a"/><rect x="437.30" y="152.5" width="5.00" height="0.8" fill="#6a6a6a"/><rect x="444.10" y="152.5" width="5.00" height="0.8" fill="#6a6a6a"/><rect x="450.90" y="152.5" width="5.00" height="0.8" fill="#6a6a6a"/><rect x="457.70" y="152.5" width="5.00" height="0.8" fill="#6a6a6a"/><rect x="464.50" y="152.5" width="5.00" height="0.8" fill="#6a6a6a"/><rect x="471.30" y="152.5" width="5.00" height="0.8" fill="#6a6a6a"/><rect x="478.10" y="152.5" width="5.00" height="0.8" fill="#6a6a6a"/><rect x="441.8" y="125.5" width="6" height="0.8" fill="#8a8a8a"/><rect x="449.8" y="125.5" width="8" height="0.8" fill="#8a8a8a"/><rect x="459.8" y="125.5" width="8" height="0.8" fill="#8a8a8a"/><rect x="430.0" y="154.1" width="5" height="0.7" fill="#8a8a8a"/><rect x="470.8" y="154.1" width="6" height="0.7" fill="#8a8a8a"/><rect x="505.3" y="150.6" width="5.2" height="0.8" fill="#d2d2d2"/><rect x="505.3" y="147.1" width="5.2" height="0.8" fill="#d2d2d2"/><rect x="505.3" y="143.6" width="5.2" height="0.8" fill="#d2d2d2"/><rect x="505.3" y="140.1" width="5.2" height="0.8" fill="#d2d2d2"/><rect x="505.3" y="136.7" width="5.2" height="0.8" fill="#d2d2d2"/><rect x="505.3" y="133.2" width="5.2" height="0.8" fill="#d2d2d2"/><rect x="505.3" y="129.7" width="5.2" height="0.8" fill="#d2d2d2"/><rect x="505.3" y="126.2" width="5.2" height="0.8" fill="#d2d2d2"/><rect x="513.30" y="139.34" width="2.30" height="11.66" fill="#eba444"/><rect x="515.60" y="139.50" width="2.30" height="11.50" fill="#f4c466"/><rect x="520.20" y="140.18" width="2.30" height="10.82" fill="#eba444"/><rect x="522.50" y="140.72" width="2.30" height="10.28" fill="#f4c466"/><rect x="527.10" y="137.67" width="2.30" height="13.33" fill="#eba444"/><rect x="529.40" y="138.32" width="2.30" height="12.68" fill="#f4c466"/><rect x="534.00" y="126.60" width="2.30" height="24.40" fill="#eba444"/><rect x="536.30" y="127.54" width="2.30" height="23.46" fill="#f4c466"/><rect x="540.90" y="148.54" width="2.30" height="2.46" fill="#eba444"/><rect x="543.20" y="148.65" width="2.30" height="2.35" fill="#f4c466"/><rect x="547.80" y="150.20" width="2.30" height="0.80" fill="#eba444"/><rect x="550.10" y="150.20" width="2.30" height="0.80" fill="#f4c466"/><rect x="554.70" y="135.60" width="2.30" height="15.40" fill="#eba444"/><rect x="557.00" y="136.75" width="2.30" height="14.25" fill="#f4c466"/><rect x="561.60" y="150.13" width="2.30" height="0.87" fill="#eba444"/><rect x="563.90" y="150.20" width="2.30" height="0.80" fill="#f4c466"/><rect x="512.3" y="151.0" width="54.9" height="0.6" fill="#d8d8d8"/><rect x="512.80" y="152.0" width="5.60" height="0.8" fill="#d8d8d8"/><rect x="519.70" y="152.0" width="5.60" height="0.8" fill="#d8d8d8"/><rect x="526.60" y="152.0" width="5.60" height="0.8" fill="#d8d8d8"/><rect x="533.50" y="152.0" width="5.60" height="0.8" fill="#d8d8d8"/><rect x="540.40" y="152.0" width="5.60" height="0.8" fill="#d8d8d8"/><rect x="547.30" y="152.0" width="5.60" height="0.8" fill="#d8d8d8"/><rect x="554.20" y="152.0" width="5.60" height="0.8" fill="#d8d8d8"/><rect x="561.10" y="152.0" width="5.60" height="0.8" fill="#d8d8d8"/><rect x="524.4" y="155.3" width="6" height="0.8" fill="#d0d0d0"/><rect x="532.4" y="155.3" width="8" height="0.8" fill="#d0d0d0"/><rect x="542.4" y="155.3" width="8" height="0.8" fill="#d0d0d0"/><rect x="512.3" y="153.6" width="5" height="0.7" fill="#d0d0d0"/><rect x="553.7" y="153.6" width="6" height="0.7" fill="#d0d0d0"/><rect x="588.3" y="150.6" width="5.2" height="0.8" fill="#d2d2d2"/><rect x="588.3" y="147.1" width="5.2" height="0.8" fill="#d2d2d2"/><rect x="588.3" y="143.5" width="5.2" height="0.8" fill="#d2d2d2"/><rect x="588.3" y="140.0" width="5.2" height="0.8" fill="#d2d2d2"/><rect x="588.3" y="136.4" width="5.2" height="0.8" fill="#d2d2d2"/><rect x="588.3" y="132.9" width="5.2" height="0.8" fill="#d2d2d2"/><rect x="588.3" y="129.3" width="5.2" height="0.8" fill="#d2d2d2"/><rect x="588.3" y="125.8" width="5.2" height="0.8" fill="#d2d2d2"/><rect x="596.30" y="139.15" width="2.65" height="11.85" fill="#eba444"/><rect x="598.95" y="139.32" width="2.65" height="11.68" fill="#f4c466"/><rect x="603.20" y="140.01" width="2.65" height="10.99" fill="#eba444"/><rect x="605.85" y="140.55" width="2.65" height="10.45" fill="#f4c466"/><rect x="610.10" y="137.46" width="2.65" height="13.54" fill="#eba444"/><rect x="612.75" y="138.11" width="2.65" height="12.89" fill="#f4c466"/><rect x="617.00" y="126.20" width="2.65" height="24.80" fill="#eba444"/><rect x="619.65" y="127.15" width="2.65" height="23.85" fill="#f4c466"/><rect x="623.90" y="148.50" width="2.65" height="2.50" fill="#eba444"/><rect x="626.55" y="148.61" width="2.65" height="2.39" fill="#f4c466"/><rect x="630.80" y="150.20" width="2.65" height="0.80" fill="#eba444"/><rect x="633.45" y="150.20" width="2.65" height="0.80" fill="#f4c466"/><rect x="637.70" y="135.35" width="2.65" height="15.65" fill="#eba444"/><rect x="640.35" y="136.52" width="2.65" height="14.48" fill="#f4c466"/><rect x="644.60" y="150.11" width="2.65" height="0.89" fill="#eba444"/><rect x="647.25" y="150.20" width="2.65" height="0.80" fill="#f4c466"/><rect x="595.3" y="151.0" width="55.6" height="0.6" fill="#d8d8d8"/><rect x="595.80" y="152.0" width="6.30" height="0.8" fill="#d8d8d8"/><rect x="602.70" y="152.0" width="6.30" height="0.8" fill="#d8d8d8"/><rect x="609.60" y="152.0" width="6.30" height="0.8" fill="#d8d8d8"/><rect x="616.50" y="152.0" width="6.30" height="0.8" fill="#d8d8d8"/><rect x="623.40" y="152.0" width="6.30" height="0.8" fill="#d8d8d8"/><rect x="630.30" y="152.0" width="6.30" height="0.8" fill="#d8d8d8"/><rect x="637.20" y="152.0" width="6.30" height="0.8" fill="#d8d8d8"/><rect x="644.10" y="152.0" width="6.30" height="0.8" fill="#d8d8d8"/><rect x="607.4" y="155.3" width="6" height="0.8" fill="#d0d0d0"/><rect x="615.4" y="155.3" width="8" height="0.8" fill="#d0d0d0"/><rect x="625.4" y="155.3" width="8" height="0.8" fill="#d0d0d0"/><rect x="595.3" y="153.6" width="5" height="0.7" fill="#d0d0d0"/><rect x="636.7" y="153.6" width="6" height="0.7" fill="#d0d0d0"/><path d="M841.6,107.6 L841.6,122.6 L845.2,119.6 L847.6,124.6 L850,123.6 L847.7,118.7 L852.3,118.4 Z" fill="#fff" stroke="#111" stroke-width="1.1" stroke-linejoin="round"/></svg>
</body></html>
